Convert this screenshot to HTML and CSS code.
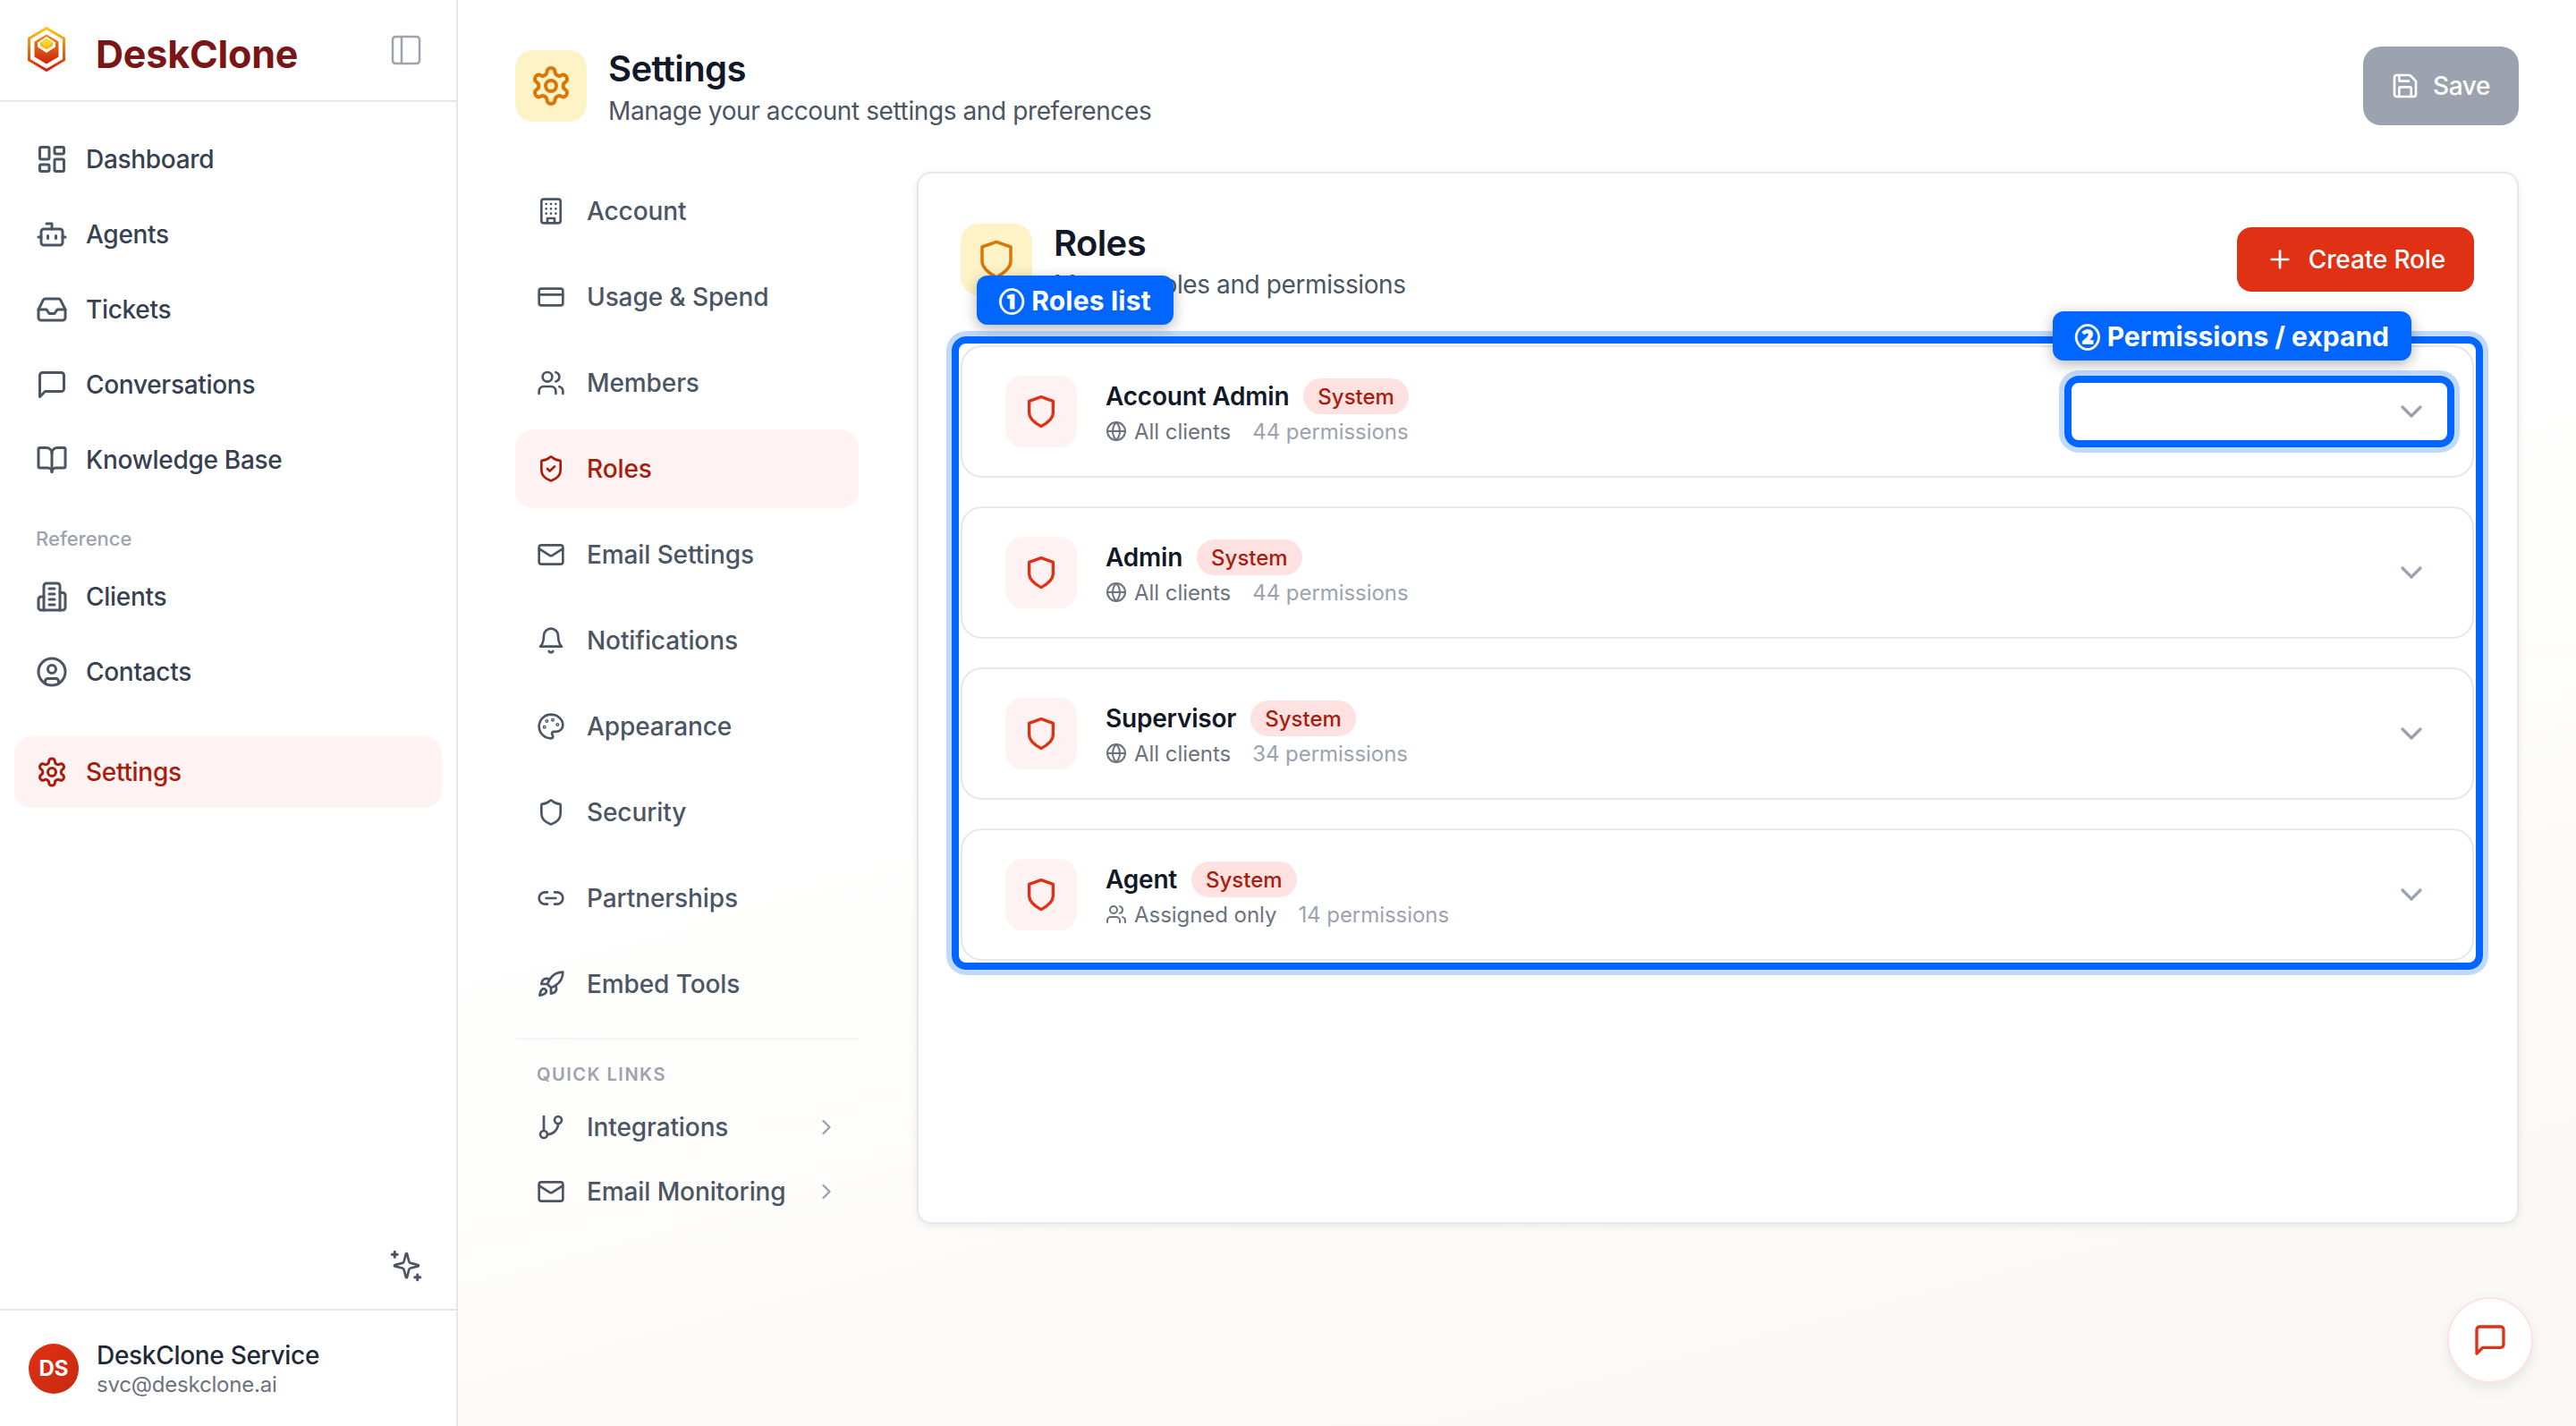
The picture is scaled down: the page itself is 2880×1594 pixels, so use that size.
FILE: index.html
```html
<!DOCTYPE html>
<html lang="en">

<head>
    <meta charset="UTF-8">
    <meta name="viewport" content="width=device-width, initial-scale=1.0">
    <title>DeskClone - Roles</title>

    <link rel="stylesheet" href="styles.css">
</head>

<body>
    <!-- icon sprite -->
    <svg class="sprite" xmlns="http://www.w3.org/2000/svg">
        <symbol id="i-panel" viewBox="0 0 24 24"><rect x="3" y="3" width="18" height="18" rx="2"/><path d="M9 3v18"/></symbol>
        <symbol id="i-dashboard" viewBox="0 0 24 24"><rect x="3" y="3" width="7" height="9" rx="1"/><rect x="14" y="3" width="7" height="5" rx="1"/><rect x="14" y="12" width="7" height="9" rx="1"/><rect x="3" y="16" width="7" height="5" rx="1"/></symbol>
        <symbol id="i-bot" viewBox="0 0 24 24"><path d="M12 8V4H8"/><rect x="4" y="8" width="16" height="12" rx="2"/><path d="M2 14h2M20 14h2M15 13v2M9 13v2"/></symbol>
        <symbol id="i-inbox" viewBox="0 0 24 24"><path d="M22 12h-6l-2 3h-4l-2-3H2"/><path d="M5.45 5.11 2 12v6a2 2 0 0 0 2 2h16a2 2 0 0 0 2-2v-6l-3.45-6.89A2 2 0 0 0 16.76 4H7.24a2 2 0 0 0-1.79 1.11z"/></symbol>
        <symbol id="i-message" viewBox="0 0 24 24"><path d="M21 15a2 2 0 0 1-2 2H7l-4 4V5a2 2 0 0 1 2-2h14a2 2 0 0 1 2 2z"/></symbol>
        <symbol id="i-book" viewBox="0 0 24 24"><path d="M12 7v14"/><path d="M3 18a1 1 0 0 1-1-1V4a1 1 0 0 1 1-1h5a4 4 0 0 1 4 4 4 4 0 0 1 4-4h5a1 1 0 0 1 1 1v13a1 1 0 0 1-1 1h-6a3 3 0 0 0-3 3 3 3 0 0 0-3-3z"/></symbol>
        <symbol id="i-clients" viewBox="0 0 24 24"><path d="M6 22V4a2 2 0 0 1 2-2h8a2 2 0 0 1 2 2v18Z"/><path d="M6 12H4a2 2 0 0 0-2 2v6a2 2 0 0 0 2 2h2M18 9h2a2 2 0 0 1 2 2v9a2 2 0 0 1-2 2h-2M10 6h4M10 10h4M10 14h4M10 18h4"/></symbol>
        <symbol id="i-contact" viewBox="0 0 24 24"><circle cx="12" cy="12" r="10"/><circle cx="12" cy="10" r="3"/><path d="M7 20.662V19a2 2 0 0 1 2-2h6a2 2 0 0 1 2 2v1.662"/></symbol>
        <symbol id="i-gear" viewBox="0 0 24 24"><path d="M12.22 2h-.44a2 2 0 0 0-2 2v.18a2 2 0 0 1-1 1.73l-.43.25a2 2 0 0 1-2 0l-.15-.08a2 2 0 0 0-2.73.73l-.22.38a2 2 0 0 0 .73 2.73l.15.1a2 2 0 0 1 1 1.72v.51a2 2 0 0 1-1 1.74l-.15.09a2 2 0 0 0-.73 2.73l.22.38a2 2 0 0 0 2.73.73l.15-.08a2 2 0 0 1 2 0l.43.25a2 2 0 0 1 1 1.73V20a2 2 0 0 0 2 2h.44a2 2 0 0 0 2-2v-.18a2 2 0 0 1 1-1.73l.43-.25a2 2 0 0 1 2 0l.15.08a2 2 0 0 0 2.73-.73l.22-.39a2 2 0 0 0-.73-2.73l-.15-.08a2 2 0 0 1-1-1.74v-.5a2 2 0 0 1 1-1.74l.15-.09a2 2 0 0 0 .73-2.73l-.22-.38a2 2 0 0 0-2.73-.73l-.15.08a2 2 0 0 1-2 0l-.43-.25a2 2 0 0 1-1-1.73V4a2 2 0 0 0-2-2z"/><circle cx="12" cy="12" r="3"/></symbol>
        <symbol id="i-sparkle" viewBox="0 0 24 24"><path d="M9.937 15.5A2 2 0 0 0 8.5 14.063l-6.135-1.582a.5.5 0 0 1 0-.962L8.5 9.936A2 2 0 0 0 9.937 8.5l1.582-6.135a.5.5 0 0 1 .963 0L14.063 8.5A2 2 0 0 0 15.5 9.937l6.135 1.581a.5.5 0 0 1 0 .964L15.5 14.063a2 2 0 0 0-1.437 1.437l-1.582 6.135a.5.5 0 0 1-.963 0z" transform="translate(1.5 1) scale(.9)"/><path d="M3.5 1.5v4M1.5 3.5h4M20.5 18.5v4M18.5 20.5h4"/></symbol>
        <symbol id="i-building" viewBox="0 0 24 24"><rect x="4" y="2" width="16" height="20" rx="2"/><path d="M9 22v-4h6v4M8 6h.01M16 6h.01M12 6h.01M12 10h.01M12 14h.01M16 10h.01M16 14h.01M8 10h.01M8 14h.01"/></symbol>
        <symbol id="i-card" viewBox="0 0 24 24"><rect x="2" y="5" width="20" height="14" rx="2"/><path d="M2 10h20"/></symbol>
        <symbol id="i-users" viewBox="0 0 24 24"><path d="M16 21v-2a4 4 0 0 0-4-4H6a4 4 0 0 0-4 4v2"/><circle cx="9" cy="7" r="4"/><path d="M22 21v-2a4 4 0 0 0-3-3.87M16 3.13a4 4 0 0 1 0 7.75"/></symbol>
        <symbol id="i-shield-check" viewBox="0 0 24 24"><path d="M20 13c0 5-3.5 7.5-7.66 8.95a1 1 0 0 1-.67-.01C7.5 20.5 4 18 4 13V6a1 1 0 0 1 1-1c2 0 4.5-1.2 6.24-2.72a1.17 1.17 0 0 1 1.52 0C14.51 3.81 17 5 19 5a1 1 0 0 1 1 1z"/><path d="m9 12 2 2 4-4"/></symbol>
        <symbol id="i-shield" viewBox="0 0 24 24"><path d="M20 13c0 5-3.5 7.5-7.66 8.95a1 1 0 0 1-.67-.01C7.5 20.5 4 18 4 13V6a1 1 0 0 1 1-1c2 0 4.5-1.2 6.24-2.72a1.17 1.17 0 0 1 1.52 0C14.51 3.81 17 5 19 5a1 1 0 0 1 1 1z"/></symbol>
        <symbol id="i-shield-flat" viewBox="0 0 24 24"><path d="M12 2.2 20 5v8c0 3.2-2.6 6-8 9-5.400-3-8-5.800-8-9V5z"/></symbol>
        <symbol id="i-mail" viewBox="0 0 24 24"><rect x="2" y="4" width="20" height="16" rx="2"/><path d="m22 7-8.970 5.700a1.940 1.940 0 0 1-2.060 0L2 7"/></symbol>
        <symbol id="i-bell" viewBox="0 0 24 24"><path d="M6 8a6 6 0 0 1 12 0c0 7 3 9 3 9H3s3-2 3-9"/><path d="M10.300 21a1.940 1.940 0 0 0 3.400 0"/></symbol>
        <symbol id="i-palette" viewBox="0 0 24 24"><circle cx="13.500" cy="6.500" r=".5"/><circle cx="17.500" cy="10.500" r=".5"/><circle cx="8.500" cy="7.500" r=".5"/><circle cx="6.500" cy="12.500" r=".5"/><path d="M12 2C6.500 2 2 6.500 2 12s4.500 10 10 10c.926 0 1.648-.746 1.648-1.688 0-.437-.18-.835-.437-1.125-.29-.289-.438-.652-.438-1.125a1.640 1.640 0 0 1 1.668-1.668h1.996c3.051 0 5.555-2.503 5.555-5.554C21.965 6.012 17.461 2 11.994 2z"/></symbol>
        <symbol id="i-link" viewBox="0 0 24 24"><path d="M9 17H7A5 5 0 0 1 7 7h2M15 7h2a5 5 0 1 1 0 10h-2M8 12h8"/></symbol>
        <symbol id="i-rocket" viewBox="0 0 24 24"><path d="M4.500 16.500c-1.500 1.260-2 5-2 5s3.740-.5 5-2c.71-.84.7-2.130-.09-2.910a2.180 2.180 0 0 0-2.910-.09z"/><path d="m12 15-3-3a22 22 0 0 1 2-3.950A12.880 12.880 0 0 1 22 2c0 2.720-.78 7.500-6 11a22.350 22.350 0 0 1-4 2z"/><path d="M9 12H4s.55-3.030 2-4c1.620-1.080 5 0 5 0M12 15v5s3.030-.55 4-2c1.080-1.620 0-5 0-5"/></symbol>
        <symbol id="i-branch" viewBox="0 0 24 24"><path d="M6 3v12"/><circle cx="18" cy="6" r="3"/><circle cx="6" cy="18" r="3"/><path d="M18 9a9 9 0 0 1-9 9"/></symbol>
        <symbol id="i-right" viewBox="0 0 24 24"><path d="m9 18 6-6-6-6"/></symbol>
        <symbol id="i-down" viewBox="0 0 24 24"><path d="m6 9 6 6 6-6"/></symbol>
        <symbol id="i-globe" viewBox="0 0 24 24"><circle cx="12" cy="12" r="10"/><path d="M12 2a14.500 14.500 0 0 0 0 20 14.500 14.500 0 0 0 0-20M2 12h20"/></symbol>
        <symbol id="i-save" viewBox="0 0 24 24"><path d="M15.200 3a2 2 0 0 1 1.400.6l3.800 3.800a2 2 0 0 1 .6 1.400V19a2 2 0 0 1-2 2H5a2 2 0 0 1-2-2V5a2 2 0 0 1 2-2z"/><path d="M17 21v-7a1 1 0 0 0-1-1H8a1 1 0 0 0-1 1v7M7 3v4a1 1 0 0 0 1 1h7"/></symbol>
        <symbol id="i-plus" viewBox="0 0 24 24"><path d="M5 12h14M12 5v14"/></symbol>
    </svg>

    <aside class="sidebar">
        <div class="brand">
            <svg class="logo" viewBox="0 0 42 50" xmlns="http://www.w3.org/2000/svg">
                <defs>
                    <linearGradient id="logo-ring" x1="0" y1="0" x2="0" y2="1">
                        <stop offset="0" stop-color="#fcc80e"/>
                        <stop offset=".45" stop-color="#ee7a12"/>
                        <stop offset="1" stop-color="#d3200f"/>
                    </linearGradient>
                    <linearGradient id="logo-box" x1="0" y1="0" x2="0" y2="1">
                        <stop offset="0" stop-color="#f08a12"/>
                        <stop offset="1" stop-color="#c9230f"/>
                    </linearGradient>
                </defs>
                <path d="M21 1.500 40.500 13v24L21 48.500 1.500 37V13z" fill="none" stroke="url(#logo-ring)" stroke-width="3"/>
                <path d="M21 8.500 34.500 16.500v17L21 41.500 7.500 33.500v-17z" fill="url(#logo-box)"/>
                <path d="M21 11 31 17.500v5L21 29 11 22.500v-5z" fill="#fff"/>
                <path d="M21 13 28 17.500v3.500L21 25.500 14 21v-3.500z" fill="#fcb712"/>
                <path d="M21 13 28 17.500 21 22 14 17.500z" fill="#fed530"/>
            </svg>
            <span class="brand-name">DeskClone</span>
            <svg class="icon icon-toggle"><use href="#i-panel"/></svg>
        </div>

        <nav class="side-nav">
            <a class="side-item"><svg class="icon"><use href="#i-dashboard"/></svg>Dashboard</a>
            <a class="side-item"><svg class="icon"><use href="#i-bot"/></svg>Agents</a>
            <a class="side-item"><svg class="icon"><use href="#i-inbox"/></svg>Tickets</a>
            <a class="side-item"><svg class="icon"><use href="#i-message"/></svg>Conversations</a>
            <a class="side-item"><svg class="icon"><use href="#i-book"/></svg>Knowledge Base</a>

            <div class="side-label">Reference</div>
            <a class="side-item"><svg class="icon"><use href="#i-clients"/></svg>Clients</a>
            <a class="side-item"><svg class="icon"><use href="#i-contact"/></svg>Contacts</a>

            <a class="side-item side-gap active"><svg class="icon"><use href="#i-gear"/></svg>Settings</a>
        </nav>

        <div class="side-tools">
            <svg class="icon"><use href="#i-sparkle"/></svg>
        </div>

        <div class="user">
            <div class="avatar">DS</div>
            <div class="user-info">
                <div class="user-name">DeskClone Service</div>
                <div class="user-mail">svc@deskclone.ai</div>
            </div>
        </div>
    </aside>

    <main class="main">
        <header class="page-head">
            <div class="tile tile-amber"><svg class="icon icon-48"><use href="#i-gear"/></svg></div>
            <div class="page-text">
                <h1>Settings</h1>
                <p>Manage your account settings and preferences</p>
            </div>
            <button class="btn btn-save"><svg class="icon icon-32"><use href="#i-save"/></svg>Save</button>
        </header>

        <div class="content">
            <nav class="sub-nav">
                <a class="sub-item"><svg class="icon icon-32"><use href="#i-building"/></svg>Account</a>
                <a class="sub-item"><svg class="icon icon-32"><use href="#i-card"/></svg>Usage &amp; Spend</a>
                <a class="sub-item"><svg class="icon icon-32"><use href="#i-users"/></svg>Members</a>
                <a class="sub-item active"><svg class="icon icon-32"><use href="#i-shield-check"/></svg>Roles</a>
                <a class="sub-item"><svg class="icon icon-32"><use href="#i-mail"/></svg>Email Settings</a>
                <a class="sub-item"><svg class="icon icon-32"><use href="#i-bell"/></svg>Notifications</a>
                <a class="sub-item"><svg class="icon icon-32"><use href="#i-palette"/></svg>Appearance</a>
                <a class="sub-item"><svg class="icon icon-32"><use href="#i-shield"/></svg>Security</a>
                <a class="sub-item"><svg class="icon icon-32"><use href="#i-link"/></svg>Partnerships</a>
                <a class="sub-item"><svg class="icon icon-32"><use href="#i-rocket"/></svg>Embed Tools</a>

                <div class="sub-divider"></div>
                <div class="sub-label">Quick Links</div>
                <a class="sub-item sub-link"><svg class="icon icon-32"><use href="#i-branch"/></svg>Integrations<svg class="icon icon-chevron"><use href="#i-right"/></svg></a>
                <a class="sub-item sub-link"><svg class="icon icon-32"><use href="#i-mail"/></svg>Email Monitoring<svg class="icon icon-chevron"><use href="#i-right"/></svg></a>
            </nav>

            <section class="card">
                <div class="card-head">
                    <div class="tile tile-amber"><svg class="icon icon-48 icon-thin"><use href="#i-shield-flat"/></svg></div>
                    <div class="card-text">
                        <h2>Roles</h2>
                        <p>Manage roles and permissions</p>
                    </div>
                    <button class="btn btn-create"><svg class="icon icon-32"><use href="#i-plus"/></svg>Create Role</button>
                </div>

                <div class="roles">
                    <div class="role">
                        <div class="tile tile-red"><svg class="icon icon-40"><use href="#i-shield-flat"/></svg></div>
                        <div class="role-info">
                            <div class="role-top"><span class="role-name">Account Admin</span><span class="badge">System</span></div>
                            <div class="role-meta"><svg class="icon icon-24"><use href="#i-globe"/></svg><span>All clients</span><span class="perms">44 permissions</span></div>
                        </div>
                        <svg class="icon icon-40 role-chevron"><use href="#i-down"/></svg>
                    </div>
                    <div class="role">
                        <div class="tile tile-red"><svg class="icon icon-40"><use href="#i-shield-flat"/></svg></div>
                        <div class="role-info">
                            <div class="role-top"><span class="role-name">Admin</span><span class="badge">System</span></div>
                            <div class="role-meta"><svg class="icon icon-24"><use href="#i-globe"/></svg><span>All clients</span><span class="perms">44 permissions</span></div>
                        </div>
                        <svg class="icon icon-40 role-chevron"><use href="#i-down"/></svg>
                    </div>
                    <div class="role">
                        <div class="tile tile-red"><svg class="icon icon-40"><use href="#i-shield-flat"/></svg></div>
                        <div class="role-info">
                            <div class="role-top"><span class="role-name">Supervisor</span><span class="badge">System</span></div>
                            <div class="role-meta"><svg class="icon icon-24"><use href="#i-globe"/></svg><span>All clients</span><span class="perms">34 permissions</span></div>
                        </div>
                        <svg class="icon icon-40 role-chevron"><use href="#i-down"/></svg>
                    </div>
                    <div class="role">
                        <div class="tile tile-red"><svg class="icon icon-40"><use href="#i-shield-flat"/></svg></div>
                        <div class="role-info">
                            <div class="role-top"><span class="role-name">Agent</span><span class="badge">System</span></div>
                            <div class="role-meta"><svg class="icon icon-24"><use href="#i-users"/></svg><span>Assigned only</span><span class="perms">14 permissions</span></div>
                        </div>
                        <svg class="icon icon-40 role-chevron"><use href="#i-down"/></svg>
                    </div>

                    <!-- annotation overlays -->
                    <div class="mark mark-list"></div>
                    <div class="mark mark-expand"></div>
                    <div class="tag tag-list"><span class="tag-num">①</span>Roles list</div>
                    <div class="tag tag-expand"><span class="tag-num">②</span>Permissions / expand</div>
                </div>
            </section>
        </div>

        <button class="chat"><svg class="icon icon-40"><use href="#i-message"/></svg></button>
    </main>
</body>

</html>
```
FILE: styles.css
```css
* {
    box-sizing: border-box;
}

html,
body {
    height: 100%;
}

body {
    margin: 0;
    display: flex;
    overflow: hidden;
    font-family: Inter, "Liberation Sans", sans-serif;
    color: #111827;
    background: #fff;
}

h1,
h2,
p {
    margin: 0;
}

.sprite {
    display: none;
}

.icon {
    width: 36px;
    height: 36px;
    flex-shrink: 0;
    fill: none;
    stroke: currentColor;
    stroke-width: 2;
    stroke-linecap: round;
    stroke-linejoin: round;
}

.icon-24 {
    width: 24px;
    height: 24px;
}

.icon-32 {
    width: 32px;
    height: 32px;
}

.icon-40 {
    width: 40px;
    height: 40px;
}

.icon-48 {
    width: 48px;
    height: 48px;
}

/* sidebar */
.sidebar {
    width: 512px;
    height: 100%;
    flex-shrink: 0;
    display: flex;
    flex-direction: column;
    border-right: 2px solid #e5e7eb;
    background: #fff;
}

.brand {
    height: 114px;
    flex-shrink: 0;
    display: flex;
    align-items: center;
    padding: 0 36px 0 31px;
    border-bottom: 2px solid #e5e7eb;
}

.logo {
    width: 42px;
    height: 50px;
    margin-top: -2px;
    flex-shrink: 0;
}

.brand-name {
    margin: 8px 0 0 34px;
    font-size: 43px;
    font-weight: 700;
    letter-spacing: -0.2px;
    color: #7a1616;
}

.icon-toggle {
    width: 40px;
    height: 40px;
    margin-left: auto;
    color: #9ca3af;
    stroke-width: 1.5;
}

.side-nav {
    padding: 24px 16px 0;
}

.side-item {
    height: 80px;
    margin-bottom: 4px;
    display: flex;
    align-items: center;
    gap: 20px;
    padding: 0 24px;
    border-radius: 20px;
    font-size: 28px;
    font-weight: 500;
    letter-spacing: -0.3px;
    color: #374151;
}

.side-item .icon {
    color: #4b5563;
}

.side-item.active,
.sub-item.active {
    background: #fef2f2;
    color: #a81c0c;
}

.side-item.active .icon,
.sub-item.active .icon {
    color: #a81c0c;
}

.side-gap {
    margin-top: 32px;
}

.side-label {
    height: 32px;
    margin: 32px 0 9px;
    padding-left: 24px;
    font-size: 22px;
    line-height: 32px;
    font-weight: 500;
    color: #9ca3af;
}

.side-tools {
    flex: 1;
    display: flex;
    align-items: flex-end;
    justify-content: flex-end;
    padding: 0 38px 30px 0;
    color: #4b5563;
}

.user {
    height: 131px;
    flex-shrink: 0;
    display: flex;
    align-items: center;
    gap: 20px;
    padding: 0 32px;
    border-top: 2px solid #e5e7eb;
}

.avatar {
    width: 56px;
    height: 56px;
    flex-shrink: 0;
    display: flex;
    align-items: center;
    justify-content: center;
    border-radius: 50%;
    background: linear-gradient(135deg, #e13013, #c62a12);
    color: #fff;
    font-size: 24px;
    font-weight: 700;
}

.user-info {
    padding-top: 2px;
}

.user-name {
    font-size: 28px;
    line-height: 34px;
    font-weight: 500;
    letter-spacing: -0.3px;
    color: #1f2937;
}

.user-mail {
    font-size: 24px;
    line-height: 32px;
    letter-spacing: -0.2px;
    color: #6b7280;
}

/* main area */
.main {
    flex: 1;
    min-width: 0;
    position: relative;
    padding: 52px 64px 0;
    background: linear-gradient(165deg, #fff 45%, #faf9f5 85%);
}

.page-head {
    height: 88px;
    display: flex;
    gap: 24px;
}

.tile {
    width: 80px;
    height: 80px;
    flex-shrink: 0;
    display: flex;
    align-items: center;
    justify-content: center;
    border-radius: 20px;
}

.page-head .tile {
    margin-top: 4px;
}

.tile-amber {
    background: #fef3c7;
    color: #d97706;
}

.tile-red {
    background: #fef2f2;
    color: #e03115;
}

.page-text h1,
.card-text h2 {
    font-size: 40px;
    line-height: 50px;
    font-weight: 600;
    letter-spacing: -0.6px;
    color: #111827;
}

.page-text p,
.card-text p {
    font-size: 28px;
    line-height: 44px;
    letter-spacing: -0.4px;
    color: #4b5563;
}

.btn {
    display: flex;
    align-items: center;
    gap: 16px;
    padding: 0 32px;
    border: none;
    border-radius: 20px;
    font-family: inherit;
    font-size: 28px;
    font-weight: 500;
    letter-spacing: -0.15px;
    color: #fff;
}

.btn-save {
    height: 88px;
    margin-left: auto;
    gap: 15px;
    padding-left: 31px;
    letter-spacing: -0.4px;
    background: #9ca3af;
}

.content {
    display: flex;
    gap: 65px;
    margin-top: 52px;
}

.sub-nav {
    width: 384px;
    flex-shrink: 0;
}

.sub-item {
    height: 88px;
    margin-bottom: 8px;
    display: flex;
    align-items: center;
    gap: 24px;
    padding: 0 24px;
    border-radius: 20px;
    font-size: 28px;
    font-weight: 500;
    letter-spacing: -0.1px;
    color: #4b5563;
}

.sub-divider {
    height: 2px;
    margin-top: 16px;
    background: #f3f4f6;
}

.sub-label {
    height: 28px;
    margin: 25px 0 9px;
    padding-left: 24px;
    font-size: 20px;
    line-height: 28px;
    font-weight: 600;
    letter-spacing: 1.5px;
    text-transform: uppercase;
    color: #9ca3af;
}

.sub-link {
    height: 72px;
    margin-bottom: 0;
    padding-right: 22px;
}

.icon-chevron {
    width: 28px;
    height: 28px;
    margin-left: auto;
    color: #9ca3af;
}

.card {
    flex: 1;
    min-width: 0;
    height: 1176px;
    padding: 56px 48px 56px 47px;
    border: 2px solid #e5e7eb;
    border-radius: 16px;
    background: #fff;
    box-shadow: 0 2px 8px rgba(0, 0, 0, 0.08);
}

.card-head {
    height: 80px;
    display: flex;
    align-items: flex-start;
    gap: 24px;
}

.card-text h2 {
    line-height: 44px;
}

.card-text p {
    line-height: 40px;
    margin-top: 4px;
}

.icon-thin {
    stroke-width: 1.75;
}

.btn-create {
    height: 72px;
    margin: 4px 0 0 auto;
    border-radius: 16px;
    background: #e03115;
}

.roles {
    position: relative;
    margin-top: 56px;
    display: flex;
    flex-direction: column;
    gap: 32px;
}

.role {
    height: 148px;
    display: flex;
    align-items: center;
    gap: 32px;
    padding: 0 48px;
    border: 2px solid #e5e7eb;
    border-radius: 24px;
    background: #fff;
}

.role-info {
    flex: 1;
    min-width: 0;
}

.role-top {
    height: 40px;
    margin-top: 3px;
    display: flex;
    align-items: center;
    gap: 16px;
}

.role-name {
    font-size: 28px;
    font-weight: 600;
    letter-spacing: -0.2px;
    color: #111827;
}

.badge {
    height: 40px;
    display: flex;
    align-items: center;
    padding: 0 16px;
    border-radius: 20px;
    background: #fee2e2;
    font-size: 24px;
    font-weight: 500;
    color: #a81c0c;
}

.role-meta {
    height: 36px;
    margin-top: 1px;
    display: flex;
    align-items: center;
    gap: 8px;
    font-size: 24px;
    letter-spacing: -0.05px;
    color: #6b7280;
}

.perms {
    margin-left: 16px;
    color: #9ca3af;
}

.role-chevron {
    color: #9ca3af;
}

/* annotation overlays */
.mark {
    position: absolute;
    border: 8px solid #0066ff;
    border-radius: 16px;
    box-shadow: 0 0 0 6px rgba(0, 102, 255, 0.25);
    pointer-events: none;
}

.mark-list {
    inset: -10px;
}

.mark-expand {
    top: 34px;
    right: 22px;
    width: 436px;
    height: 80px;
}

.tag {
    position: absolute;
    height: 55px;
    display: flex;
    align-items: center;
    padding: 0 25px;
    border-radius: 12px;
    background: #0066ff;
    box-shadow: 0 4px 16px rgba(0, 0, 0, 0.3);
    font-size: 30px;
    font-weight: 700;
    color: #fff;
}

.tag-num {
    margin-right: 8px;
    font-family: "Noto Sans CJK SC", "DejaVu Sans", sans-serif;
    font-size: 28px;
    -webkit-text-stroke: 1.5px #fff;
}

.tag-list {
    top: -78px;
    left: 18px;
    letter-spacing: 0.2px;
}

.tag-expand {
    top: -38px;
    right: 70px;
}

.chat {
    position: absolute;
    right: 48px;
    bottom: 48px;
    width: 96px;
    height: 96px;
    display: flex;
    align-items: center;
    justify-content: center;
    padding: 0;
    border: 2px solid #fee2e2;
    border-radius: 50%;
    background: #fff;
    box-shadow: 0 6px 16px rgba(0, 0, 0, 0.08);
    color: #e03115;
}
```
